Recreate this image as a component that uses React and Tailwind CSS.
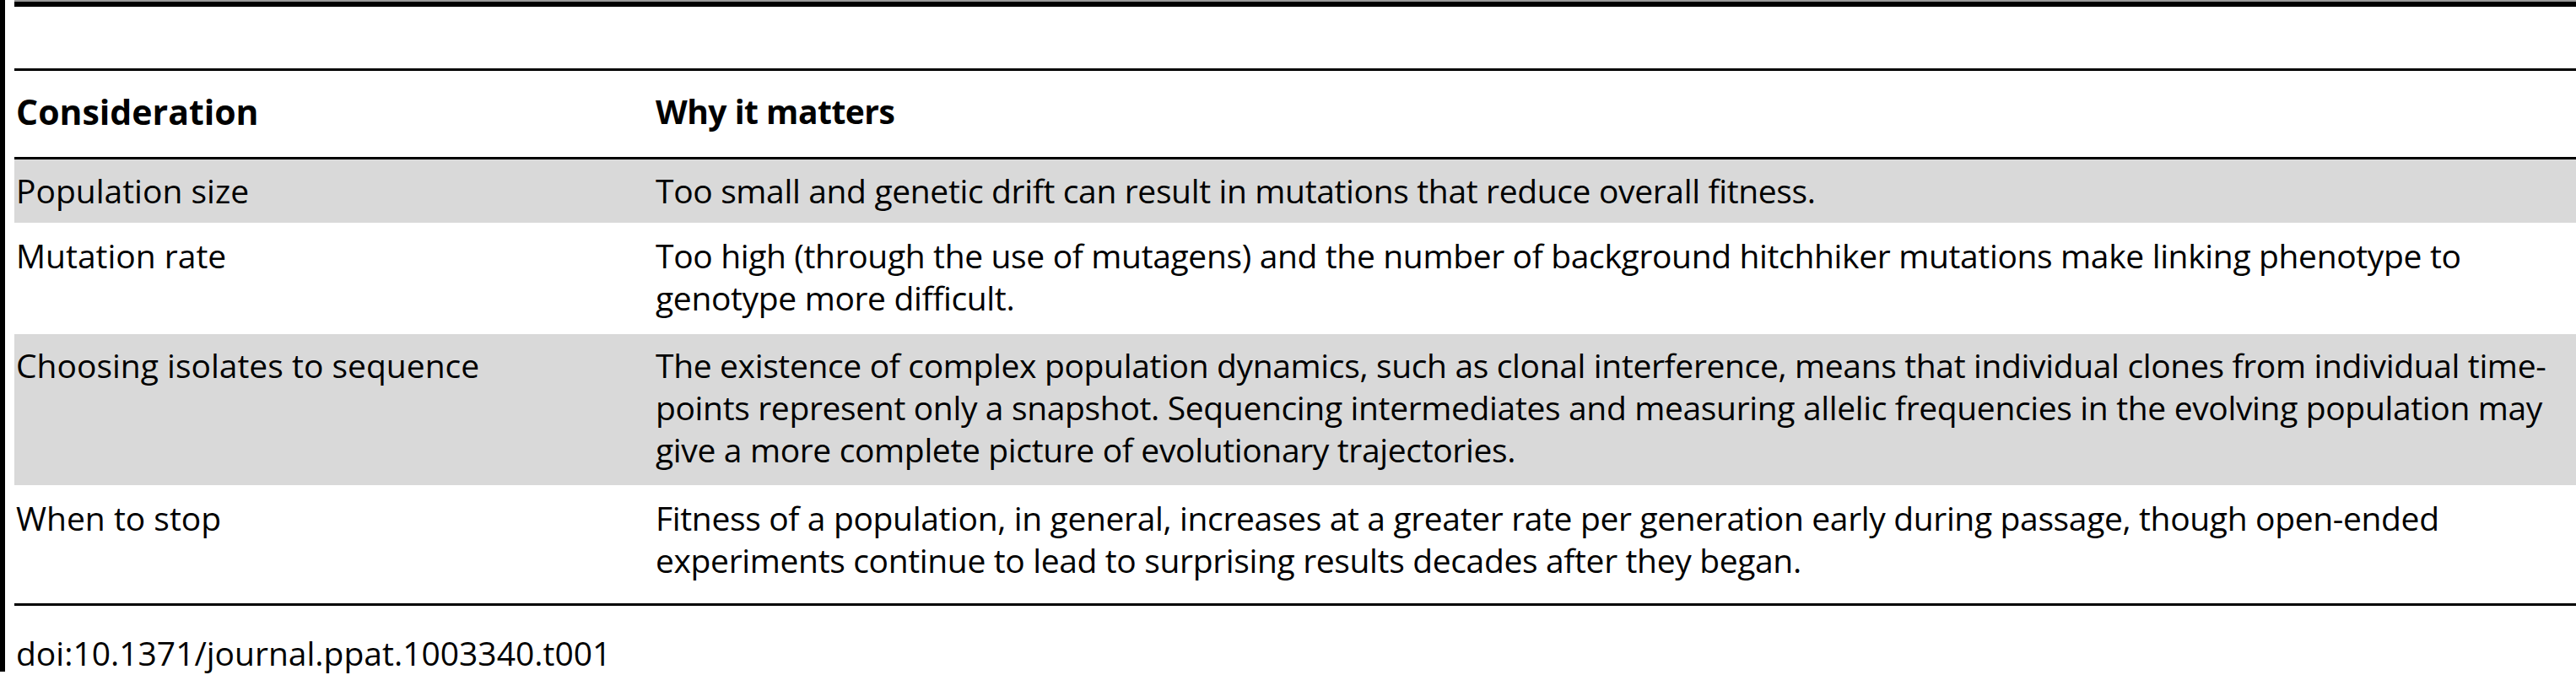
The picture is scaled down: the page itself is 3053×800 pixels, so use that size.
const rows = [
  {
    label: 'Population size',
    lines: ['Too small and genetic drift can result in mutations that reduce overall fitness.'],
    shaded: true,
    h: 'h-[77px]',
  },
  {
    label: 'Mutation rate',
    lines: [
      'Too high (through the use of mutagens) and the number of background hitchhiker mutations make linking phenotype to',
      'genotype more difficult.',
    ],
    shaded: false,
    h: 'h-[130px]',
  },
  {
    label: 'Choosing isolates to sequence',
    lines: [
      'The existence of complex population dynamics, such as clonal interference, means that individual clones from individual time-',
      'points represent only a snapshot. Sequencing intermediates and measuring allelic frequencies in the evolving population may',
      'give a more complete picture of evolutionary trajectories.',
    ],
    shaded: true,
    h: 'h-[181px]',
  },
  {
    label: 'When to stop',
    lines: [
      'Fitness of a population, in general, increases at a greater rate per generation early during passage, though open-ended',
      'experiments continue to lead to surprising results decades after they began.',
    ],
    shaded: false,
    h: 'h-[138px]',
  },
]

export default function App() {
  return (
    <div className="flex h-[800px] w-[3053px] overflow-hidden bg-white font-['Open_Sans',sans-serif] text-[39px] leading-[50px] text-black">
      <div className="h-[796px] w-[6px] shrink-0 bg-black" />
      <div className="ml-[11px] flex min-w-0 flex-1 flex-col">
        <div className="h-[8px] border-t-2 border-[#9a9a9a] bg-black" />
        <div className="h-[73px]" />
        <div className="h-[3px] bg-black" />

        <div className="flex h-[102px] pt-[23px] font-bold">
          <div className="w-[760px] shrink-0 pl-[2px] text-[41px]">Consideration</div>
          <div className="whitespace-nowrap tracking-[-0.5px]">Why it matters</div>
        </div>
        <div className="h-[3px] bg-black" />

        {rows.map((row) => (
          <div
            key={row.label}
            className={`flex ${row.h} border-b-2 border-white pt-[12px] ${row.shaded ? 'bg-[#d9d9d9]' : 'bg-white'}`}
          >
            <div className="w-[760px] shrink-0 whitespace-nowrap pl-[2px]">{row.label}</div>
            <div className="min-w-0 flex-1 whitespace-nowrap tracking-[-0.35px]">
              {row.lines.map((line) => (
                <div key={line}>{line}</div>
              ))}
            </div>
          </div>
        ))}

        <div className="h-[3px] bg-black" />
        <div className="mt-[31px] whitespace-nowrap pl-[2px]">doi:10.1371/journal.ppat.1003340.t001</div>
      </div>
    </div>
  )
}
